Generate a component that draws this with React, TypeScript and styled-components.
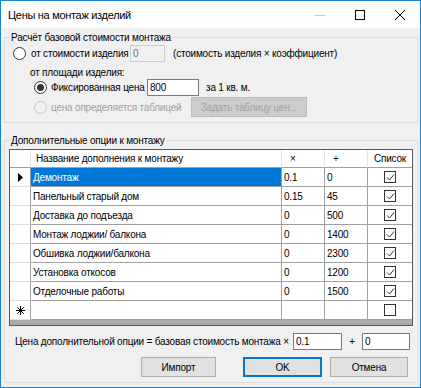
import React from 'react'
import styled, { createGlobalStyle } from 'styled-components'

const GlobalStyle = createGlobalStyle`
  html, body { margin: 0; padding: 0; background: #fff; }
  body {
    font-family: "Liberation Sans", Arial, sans-serif;
    font-size: 10px;
    letter-spacing: -0.2px;
    color: #000;
  }
  * { box-sizing: border-box; }
`

interface Option {
    name: string;
    mul: string;
    add: string;
}

const options: Option[] = [
    { name: 'Демонтаж', mul: '0.1', add: '0' },
    { name: 'Панельный старый дом', mul: '0.15', add: '45' },
    { name: 'Доставка до подъезда', mul: '0', add: '500' },
    { name: 'Монтаж лоджии/ балкона', mul: '0', add: '1400' },
    { name: 'Обшивка лоджии/балкона', mul: '0', add: '2300' },
    { name: 'Установка откосов', mul: '0', add: '1200' },
    { name: 'Отделочные работы', mul: '0', add: '1500' },
]

const Check = ({ checked }: { checked: boolean }) => (
    <CheckBox>
        {checked && (
            <svg width="9" height="9" viewBox="0 0 9 9">
                <path d="M1 4.5 L3.5 7 L8 1.5" fill="none" stroke="#333" strokeWidth="1" />
            </svg>
        )}
    </CheckBox>
)

export default function App() {
    return (
        <>
            <GlobalStyle />
            <Window>
                <TitleBar>
                    <Title>Цены на монтаж изделий</Title>
                    <Caption>
                        <CaptionButton $disabled>
                            <svg width="10" height="10" viewBox="0 0 10 10"><path d="M0 5.5 H10" stroke="currentColor" /></svg>
                        </CaptionButton>
                        <CaptionButton>
                            <svg width="10" height="10" viewBox="0 0 10 10"><rect x="0.5" y="0.5" width="9" height="9" fill="none" stroke="currentColor" /></svg>
                        </CaptionButton>
                        <CaptionButton>
                            <svg width="10" height="10" viewBox="0 0 10 10"><path d="M0 0 L10 10 M10 0 L0 10" stroke="currentColor" /></svg>
                        </CaptionButton>
                    </Caption>
                </TitleBar>

                <Client>
                    <Group $top={3}>
                        <Legend>Расчёт базовой стоимости монтажа</Legend>
                        <Row $h={17} $mt={1}>
                            <Radio $left={8} />
                            <Label $w={99} $left={5}>от стоимости изделия</Label>
                            <Input $w={35} $disabled>0</Input>
                            <Label $left={8}>(стоимость изделия × коэффициент)</Label>
                        </Row>
                        <Row $h={13} $mt={4}>
                            <Label $left={25}>от площади изделия:</Label>
                        </Row>
                        <Row $h={17}>
                            <Radio $left={29} $checked />
                            <Label $w={96} $left={4}>Фиксированная цена</Label>
                            <Input $w={52}>800</Input>
                            <Label $left={7}>за 1 кв. м.</Label>
                        </Row>
                        <Row $h={20} $mt={1} $pb={5}>
                            <Radio $left={29} $disabled />
                            <Label $w={140} $left={4} $disabled>цена определяется таблицей</Label>
                            <Button $w={116} $disabled>Задать таблицу цен...</Button>
                        </Row>
                    </Group>

                    <Group $top={11}>
                        <Legend>Дополнительные опции к монтажу</Legend>
                        <Grid>
                            <HeadCell />
                            <HeadCell $pad={5}>Название дополнения к монтажу</HeadCell>
                            <HeadCell $pad={8}>×</HeadCell>
                            <HeadCell $pad={8}>+</HeadCell>
                            <HeadCell $center $last>Список</HeadCell>

                            {options.map((o, i) => (
                                <React.Fragment key={o.name}>
                                    <RowHead>
                                        {i === 0 && (
                                            <svg width="5" height="9" viewBox="0 0 5 9"><path d="M0 0 L5 4.5 L0 9 Z" fill="#000" /></svg>
                                        )}
                                    </RowHead>
                                    <Cell $selected={i === 0}>{o.name}</Cell>
                                    <Cell>{o.mul}</Cell>
                                    <Cell>{o.add}</Cell>
                                    <Cell $center $last><Check checked /></Cell>
                                </React.Fragment>
                            ))}

                            <RowHead>
                                <svg width="9" height="9" viewBox="0 0 9 9">
                                    <path d="M4.5 0 V9 M0 4.5 H9 M1.3 1.3 L7.7 7.7 M7.7 1.3 L1.3 7.7" stroke="#000" strokeWidth="1" />
                                </svg>
                            </RowHead>
                            <Cell />
                            <Cell />
                            <Cell />
                            <Cell $center $last><Check checked={false} /></Cell>
                            <Workspace />
                        </Grid>

                        <Row $h={17} $mt={7}>
                            <Label $w={278} $left={10}>Цена дополнительной опции = базовая стоимость монтажа ×</Label>
                            <Input $w={49}>0.1</Input>
                            <Label $w={20} $center>+</Label>
                            <Input $w={48}>0</Input>
                        </Row>
                        <Row $h={20} $mt={7} $pb={5}>
                            <Button $w={75} $left={136}>Импорт</Button>
                            <Button $w={79} $left={27} $default>OK</Button>
                            <Button $w={78} $left={8}>Отмена</Button>
                        </Row>
                    </Group>
                </Client>
            </Window>
        </>
    )
}

const Window = styled.div`
    width: 421px;
    height: 388px;
    border: 1px solid #1883d7;
    display: flex;
    flex-direction: column;
    background: #f0f0f0;
    overflow: hidden;
`
const TitleBar = styled.div`
    flex: none;
    height: 27px;
    background: #fff;
    display: flex;
    align-items: center;
    justify-content: space-between;
`
const Title = styled.span`
    padding-left: 7px;
    font-size: 11px;
    letter-spacing: -0.3px;
    line-height: 16px;
`
const Caption = styled.div`
    display: flex;
    height: 100%;
`
const CaptionButton = styled.div<{ $disabled?: boolean }>`
    width: 40px;
    display: flex;
    align-items: center;
    justify-content: center;
    color: ${p => p.$disabled ? '#c8c8c8' : '#000'};
`
const Client = styled.div`
    flex: 1;
    display: flex;
    flex-direction: column;
    padding: 0 2px 0 3px;
`
const Group = styled.fieldset<{ $top: number }>`
    margin: ${p => p.$top}px 0 0;
    padding: 0;
    min-width: 0;
    border: 1px solid #dcdcdc;
`
const Legend = styled.legend`
    margin-left: 5px;
    padding: 0 1px;
    line-height: 13px;
`
const Row = styled.div<{ $h: number; $mt?: number; $pb?: number }>`
    display: flex;
    align-items: center;
    height: ${p => p.$h + (p.$pb || 0)}px;
    margin-top: ${p => p.$mt || 0}px;
    padding-bottom: ${p => p.$pb || 0}px;
    white-space: nowrap;
`
const Label = styled.span<{ $w?: number; $left?: number; $disabled?: boolean; $center?: boolean }>`
    flex: none;
    width: ${p => p.$w ? `${p.$w}px` : 'auto'};
    margin-left: ${p => p.$left || 0}px;
    color: ${p => p.$disabled ? '#a0a0a0' : '#000'};
    text-align: ${p => p.$center ? 'center' : 'left'};
    line-height: 13px;
`
const Radio = styled.span<{ $left?: number; $checked?: boolean; $disabled?: boolean }>`
    flex: none;
    width: 13px;
    height: 13px;
    margin-left: ${p => p.$left || 0}px;
    border-radius: 50%;
    border: 1px solid ${p => p.$disabled ? '#c5c5c5' : '#333'};
    background: ${p => p.$disabled ? '#f0f0f0' : '#fff'};
    display: flex;
    align-items: center;
    justify-content: center;

    &::after {
        content: '';
        display: ${p => p.$checked ? 'block' : 'none'};
        width: 7px;
        height: 7px;
        border-radius: 50%;
        background: #333;
    }
`
const Input = styled.div<{ $w: number; $disabled?: boolean }>`
    flex: none;
    width: ${p => p.$w}px;
    height: 17px;
    padding: 0 2px;
    line-height: 15px;
    border: 1px solid ${p => p.$disabled ? '#cccccc' : '#7a7a7a'};
    background: ${p => p.$disabled ? '#f0f0f0' : '#fff'};
    color: ${p => p.$disabled ? '#6d6d6d' : '#000'};
`
const Button = styled.div<{ $w: number; $left?: number; $disabled?: boolean; $default?: boolean }>`
    flex: none;
    width: ${p => p.$w}px;
    height: 20px;
    margin-left: ${p => p.$left || 0}px;
    display: flex;
    align-items: center;
    justify-content: center;
    background: ${p => p.$disabled ? '#cccccc' : '#e1e1e1'};
    border: ${p => p.$default ? '2px solid #0078d7' : `1px solid ${p.$disabled ? '#bfbfbf' : '#adadad'}`};
    color: ${p => p.$disabled ? '#a3a3a3' : '#000'};
`
const Grid = styled.div`
    margin: 2px 2px 0 4px;
    width: 404px;
    border: 1px solid #5a5a5a;
    background: #fff;
    display: grid;
    grid-template-columns: 21px 251px 43px 43px 44px;
    grid-template-rows: 18px repeat(8, 19px) 5px;
`
const HeadCell = styled.div<{ $pad?: number; $center?: boolean; $last?: boolean }>`
    display: flex;
    align-items: center;
    justify-content: ${p => p.$center ? 'center' : 'flex-start'};
    padding-left: ${p => p.$pad || 0}px;
    border-right: ${p => p.$last ? 'none' : '1px solid #e5e5e5'};
    border-bottom: 1px solid #a0a0a0;
    background: #fff;
`
const RowHead = styled.div`
    display: flex;
    align-items: center;
    justify-content: center;
    border-right: 1px solid #a0a0a0;
    border-bottom: 1px solid #e0e0e0;
    background: #fff;
`
const Cell = styled.div<{ $selected?: boolean; $center?: boolean; $last?: boolean }>`
    display: flex;
    align-items: center;
    justify-content: ${p => p.$center ? 'center' : 'flex-start'};
    padding: 0 2px;
    overflow: hidden;
    white-space: nowrap;
    border-right: ${p => p.$last ? 'none' : '1px solid #a0a0a0'};
    border-bottom: 1px solid #a0a0a0;
    background: ${p => p.$selected ? '#0078d7' : '#fff'};
    color: ${p => p.$selected ? '#fff' : '#000'};
`
const CheckBox = styled.span`
    width: 12px;
    height: 12px;
    border: 1px solid #333;
    background: #fff;
    display: flex;
    align-items: center;
    justify-content: center;
`
const Workspace = styled.div`
    grid-column: 1 / -1;
    background: #ababab;
`
